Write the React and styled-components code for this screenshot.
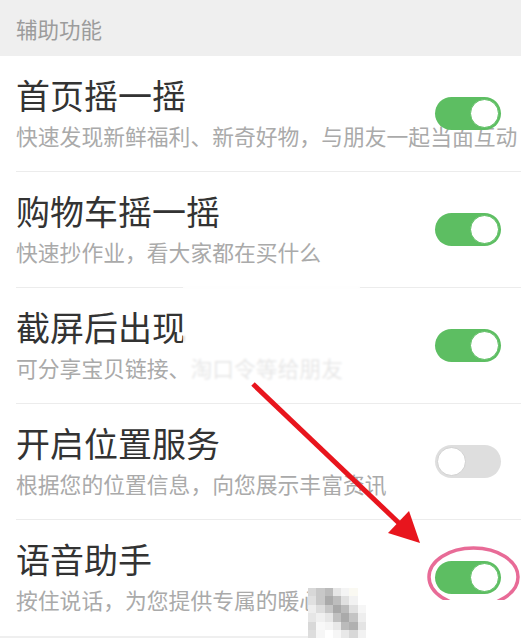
import React from "react";
import styled, { createGlobalStyle } from "styled-components";

const GlobalStyle = createGlobalStyle`
  html, body { margin: 0; padding: 0; background: #efefef; }
  body { font-family: "Noto Sans CJK SC", "Noto Sans", sans-serif; }
`;

const Page = styled.div`
  position: relative;
  width: 521px;
  height: 638px;
  overflow: hidden;
  background: #efefef;
`;

const SectionHeader = styled.div`
  height: 56px;
  display: flex;
  align-items: center;
  padding-left: 16px;
  font-size: 21.5px;
  color: #9c9c9c;
  background: #efefef;
`;

const List = styled.div`
  background: #ffffff;
`;

const Row = styled.div`
  height: 115px;
  margin-left: 16px;
  padding-right: 20px;
  display: flex;
  align-items: center;
  border-bottom: 1px solid ${(p) => (p.$last ? "transparent" : "#ececec")};
`;

const TextBlock = styled.div`
  flex: 1;
  min-width: 0;
  display: flex;
  flex-direction: column;
  padding-top: 2px;
`;

const Title = styled.div`
  font-size: 34px;
  line-height: 42px;
  color: #333333;
  white-space: nowrap;
`;

const Desc = styled.div`
  font-size: 21.8px;
  line-height: 40px;
  color: #aaaaaa;
  white-space: nowrap;
`;

const Track = styled.div`
  position: relative;
  flex-shrink: 0;
  width: 66px;
  height: 33px;
  border-radius: 17px;
  box-sizing: border-box;
  padding: 2px;
  display: flex;
  justify-content: ${(p) => (p.$on ? "flex-end" : "flex-start")};
  background: ${(p) => (p.$on ? "#5dbe62" : "#dedede")};
`;

const Knob = styled.div`
  width: 29px;
  height: 29px;
  border-radius: 50%;
  background: #ffffff;
  box-sizing: border-box;
  border: 1px solid ${(p) => (p.$on ? "#5dbe62" : "#d0d0d0")};
`;

const Fade = styled.div`
  position: absolute;
  left: 183px;
  top: 283px;
  width: 177px;
  height: 110px;
  background: rgba(255, 255, 255, 0.72);
  backdrop-filter: blur(1.2px);
`;

const Overlay = styled.svg`
  position: absolute;
  left: 0;
  top: 0;
  pointer-events: none;
`;

const WhiteCover = styled.div`
  position: absolute;
  left: 308px;
  top: 600px;
  right: 0;
  bottom: 0;
  background: #ffffff;
`;

const Mosaic = styled.div`
  position: absolute;
  left: 308px;
  top: 588px;
  display: grid;
  grid-template-columns: repeat(7, 8.3px);
  grid-auto-rows: 8.4px;
`;

const Cell = styled.div`
  background: ${(p) => p.$c};
`;

const rows = [
  { title: "首页摇一摇", desc: "快速发现新鲜福利、新奇好物，与朋友一起当面互动", on: true },
  { title: "购物车摇一摇", desc: "快速抄作业，看大家都在买什么", on: true },
  { title: "截屏后出现", desc: "可分享宝贝链接、淘口令等给朋友", on: true },
  { title: "开启位置服务", desc: "根据您的位置信息，向您展示丰富资讯", on: false },
  { title: "语音助手", desc: "按住说话，为您提供专属的暖心", on: true },
];

const mosaic = [
  ["#d8d8d8", "#c8c8c8", "#bbbbbb", "#e6e6e6", "#f4f4f4", "#faf9f2", "#ffffff"],
  ["#e0e0e0", "#c8c8c8", "#aaaaaa", "#bdbdbd", "#e0e0e0", "#f2f2f2", "#ffffff"],
  ["#eeeeee", "#dddddd", "#c6c6c6", "#a8a8a8", "#bbbbbb", "#e0e0e0", "#f6f6f6"],
  ["#e6e6e6", "#f0f0f0", "#e6e6e6", "#c0c0c0", "#aaaaaa", "#c4c4c4", "#eeeeee"],
  ["#d8d8d8", "#f8f8f8", "#f4f4f4", "#e8e8e8", "#bbbbbb", "#b0b0b0", "#e4e4e4"],
  ["#dddddd", "#f6f6f6", "#ffffff", "#f6f6f6", "#e8e8e8", "#d8d8d8", "#f2f2f2"],
];

export default function App() {
  return (
    <>
      <GlobalStyle />
      <Page>
        <SectionHeader>辅助功能</SectionHeader>
        <List>
          {rows.map((r, i) => (
            <Row key={r.title} $last={i === rows.length - 1}>
              <TextBlock>
                <Title>{r.title}</Title>
                <Desc>{r.desc}</Desc>
              </TextBlock>
              <Track $on={r.on}>
                <Knob $on={r.on} />
              </Track>
            </Row>
          ))}
        </List>
        <Fade />
        <Overlay width="521" height="638" viewBox="0 0 521 638">
          <line x1="253" y1="384" x2="401" y2="525" stroke="#e8151d" strokeWidth="5" />
          <polygon points="420,543 388,533 409,511" fill="#e8151d" />
          <ellipse cx="473.5" cy="577" rx="44.5" ry="29" fill="none" stroke="#e86b97" strokeWidth="3.5" />
        </Overlay>
        <WhiteCover />
        <Mosaic>
          {mosaic.flat().map((c, i) => (
            <Cell key={i} $c={c} />
          ))}
        </Mosaic>
      </Page>
    </>
  );
}
